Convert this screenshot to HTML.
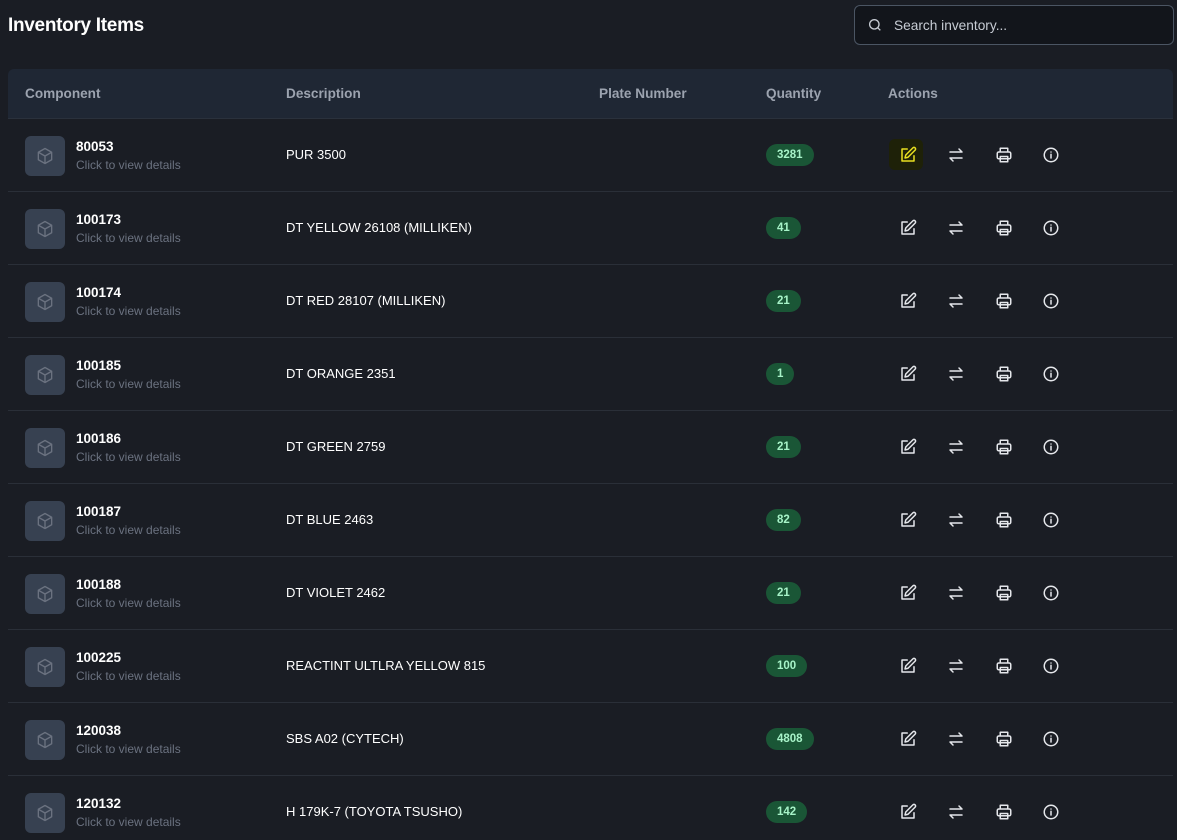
<!DOCTYPE html>
<html><head><meta charset="utf-8"><style>
*{box-sizing:border-box;margin:0;padding:0}
html,body{width:1177px;height:840px;overflow:hidden}
body{background:#1a1d24;font-family:"Liberation Sans",sans-serif;color:#fff;position:relative}
h1{position:absolute;left:8px;top:15px;font-size:19px;font-weight:bold;letter-spacing:-0.3px}
.search{position:absolute;left:854px;top:5px;width:320px;height:40px;border:1px solid #4b5563;border-radius:6px;background:#12151b;}
.search span{position:absolute;left:39px;top:12px;font-size:13.7px;color:#c7ccd4}
.search svg{position:absolute;left:12px;top:11px}
.tbl{position:absolute;left:8px;top:69px;width:1165px;height:780px;border-radius:6px;overflow:hidden}
.head{height:50px;background:#1f2734;position:relative;font-size:13.6px;font-weight:bold;color:#9ca3af;border-bottom:1px solid #2a313c}
.head div{position:absolute;top:17px}
.row{height:73px;position:relative;border-bottom:1px solid #2a2f38;background:#1a1d24}
.ic{position:absolute;left:17px;top:17px;width:40px;height:40px;border-radius:6px;background:#374151}
.ic svg{position:absolute;left:10px;top:10px}
.id{position:absolute;left:68px;top:20px;font-size:13.5px;font-weight:bold}
.sub{position:absolute;left:68px;top:39px;font-size:12px;color:#6b7280}
.desc{position:absolute;left:278px;top:28px;font-size:13px}
.q{position:absolute;left:758px;top:25px;height:22px;padding:0 11px;border-radius:11px;background:#1a5636;color:#a7f3c8;font-size:11.5px;font-weight:bold;line-height:22px}
.a{position:absolute;top:27px}
</style></head><body>
<h1>Inventory Items</h1>
<div class="search"><svg width="16" height="16" viewBox="0 0 24 24" fill="none" stroke="#c7ccd4" stroke-width="2"><circle cx="11" cy="11" r="7"/><path d="M20 20l-4-4"/></svg><span>Search inventory...</span></div>
<div class="tbl">
<div class="head"><div style="left:17px">Component</div><div style="left:278px">Description</div><div style="left:591px">Plate Number</div><div style="left:758px">Quantity</div><div style="left:880px">Actions</div></div>
<div id="rows"></div>
</div>
<script>
var d=[["80053","PUR 3500","3281"],["100173","DT YELLOW 26108 (MILLIKEN)","41"],["100174","DT RED 28107 (MILLIKEN)","21"],["100185","DT ORANGE 2351","1"],["100186","DT GREEN 2759","21"],["100187","DT BLUE 2463","82"],["100188","DT VIOLET 2462","21"],["100225","REACTINT ULTLRA YELLOW 815","100"],["120038","SBS A02 (CYTECH)","4808"],["120132","H 179K-7 (TOYOTA TSUSHO)","142"]];
var box='<svg width="20" height="20" viewBox="0 0 24 24" fill="none" stroke="#6b7280" stroke-width="1.6" stroke-linejoin="round"><path d="M12 3l8 4.5v9L12 21l-8-4.5v-9z"/><path d="M4 7.5l8 4.5 8-4.5M12 12v9"/></svg>';
function edit(c){return '<svg width="18" height="18" viewBox="0 0 24 24" fill="none" stroke="'+c+'" stroke-width="2" stroke-linecap="round" stroke-linejoin="round"><path d="M11 4H4v16h16v-7"/><path d="M18.5 2.5a2.1 2.1 0 013 3L12 15l-4 1 1-4z"/></svg>';}
var sw='<svg width="18" height="18" viewBox="0 0 24 24" fill="none" stroke="#e5e7eb" stroke-width="2" stroke-linecap="round" stroke-linejoin="round"><path d="M4 8h16l-4-4M20 16H4l4 4"/></svg>';
var pr='<svg width="18" height="18" viewBox="0 0 24 24" fill="none" stroke="#e5e7eb" stroke-width="2" stroke-linejoin="round"><path d="M7 8V3h10v5"/><rect x="3" y="8" width="18" height="9" rx="2"/><rect x="7" y="14" width="10" height="7"/></svg>';
var inf='<svg width="18" height="18" viewBox="0 0 24 24" fill="none" stroke="#e5e7eb" stroke-width="2" stroke-linecap="round"><circle cx="12" cy="12" r="9"/><path d="M12 11v5M12 8h.01"/></svg>';
var h='';d.forEach(function(r,i){
var e=i==0?'<div class="a" style="left:881px;top:20px;width:34px;height:31px;background:#1e2108;border-radius:6px"></div><div class="a" style="left:891px">'+edit('#e8e020')+'</div>':'<div class="a" style="left:891px">'+edit('#e5e7eb')+'</div>';
h+='<div class="row"><div class="ic">'+box+'</div><div class="id">'+r[0]+'</div><div class="sub">Click to view details</div><div class="desc">'+r[1]+'</div><div class="q">'+r[2]+'</div>'+e+'<div class="a" style="left:939px">'+sw+'</div><div class="a" style="left:987px">'+pr+'</div><div class="a" style="left:1034px">'+inf+'</div></div>';});
document.getElementById('rows').innerHTML=h;
</script>
</body></html>
